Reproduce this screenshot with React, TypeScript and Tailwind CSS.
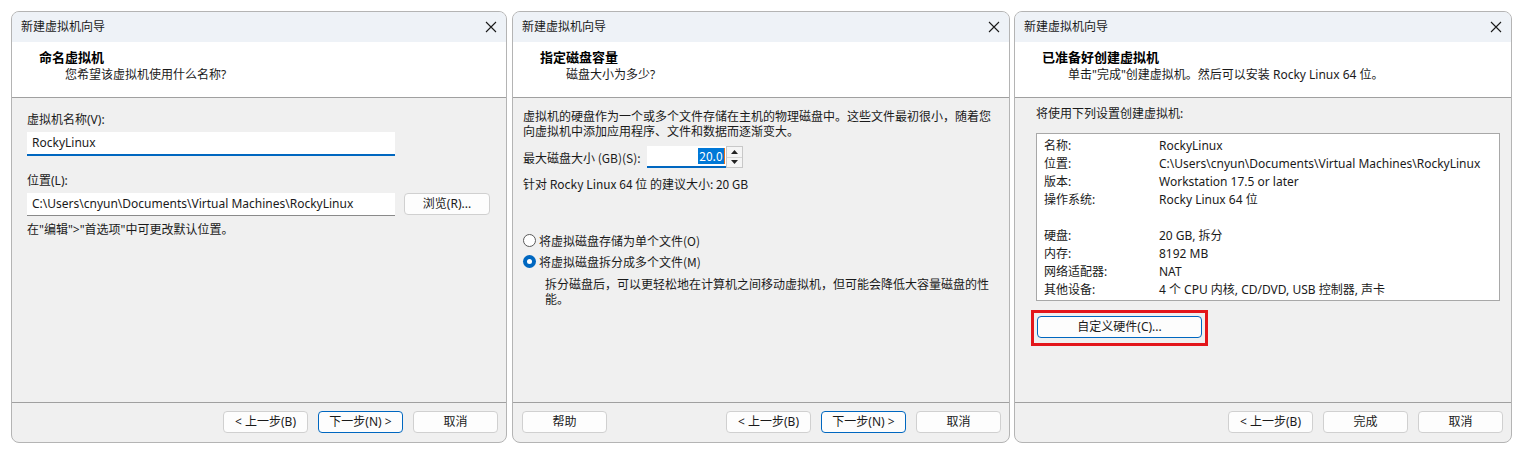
import React from "react";

const font = { fontFamily: '"Noto Sans", "Noto Sans CJK SC", sans-serif' };

const CloseIcon = () => (
  <svg width="12" height="12" viewBox="0 0 12 12" className="text-[#1a1a1a]">
    <path d="M1 1 L11 11 M11 1 L1 11" stroke="currentColor" strokeWidth="1.1" fill="none" />
  </svg>
);

const Btn = ({ children, primary = false, className = "" }: { children: React.ReactNode; primary?: boolean; className?: string }) => (
  <div
    className={`h-[22px] flex items-center justify-center rounded-[4px] border bg-[#fdfdfd] text-[12px] text-[#1a1a1a] ${
      primary ? "border-[#0067c0]" : "border-[#d0d0d0]"
    } ${className}`}
  >
    {children}
  </div>
);

const Dialog = ({
  width,
  title,
  subtitle,
  children,
  footer,
}: {
  width: string;
  title: string;
  subtitle: React.ReactNode;
  children: React.ReactNode;
  footer: React.ReactNode;
}) => (
  <div className={`${width} h-[432px] flex flex-col border border-[#b4b4b4] rounded-[8px] overflow-hidden bg-[#f0f0f0]`}>
    <div className="h-[30px] bg-[#eef2f7] flex items-center justify-between pl-[9px] pr-[9px]">
      <span className="text-[12px] text-[#1a1a1a]">新建虚拟机向导</span>
      <CloseIcon />
    </div>
    <div className="h-[56px] bg-white border-b border-[#a0a0a0] pl-[27px] pt-[6px]">
      <div className="text-[13px] font-bold leading-[18px] text-black">{title}</div>
      <div className="text-[12px] leading-[17px] pl-[26px] text-[#1a1a1a]">{subtitle}</div>
    </div>
    <div className="flex-1 flex flex-col">{children}</div>
    <div className="h-[40px] border-t border-[#a0a0a0] flex items-start pt-[8px] px-[8px]">{footer}</div>
  </div>
);

const NavButtons = ({ last = false }: { last?: boolean }) => (
  <div className="flex gap-[10px] ml-auto">
    <Btn className="w-[85px]">&lt; 上一步(B)</Btn>
    {last ? <Btn className="w-[85px]">完成</Btn> : <Btn primary className="w-[85px]">下一步(N) &gt;</Btn>}
    <Btn className="w-[85px]">取消</Btn>
  </div>
);

const summary: [string, string][] = [
  ["名称:", "RockyLinux"],
  ["位置:", "C:\\Users\\cnyun\\Documents\\Virtual Machines\\RockyLinux"],
  ["版本:", "Workstation 17.5 or later"],
  ["操作系统:", "Rocky Linux 64 位"],
  ["", ""],
  ["硬盘:", "20 GB, 拆分"],
  ["内存:", "8192 MB"],
  ["网络适配器:", "NAT"],
  ["其他设备:", "4 个 CPU 内核, CD/DVD, USB 控制器, 声卡"],
];

export default function App() {
  return (
    <div className="w-[1523px] h-[453px] bg-white flex gap-[5px] pl-[11px] pt-[11px] text-[#1a1a1a]" style={font}>
      {/* step 1 */}
      <Dialog width="w-[496px]" title="命名虚拟机" subtitle="您希望该虚拟机使用什么名称?" footer={<NavButtons />}>
        <div className="pl-[15px] pt-[14px] text-[12px]">
          <div className="leading-[16px]">虚拟机名称(V):</div>
          <div className="mt-[4px] w-[368px] h-[24px] bg-white border-b-2 border-[#0067c0] flex items-center pl-[5px]">RockyLinux</div>
          <div className="mt-[17px] leading-[16px]">位置(L):</div>
          <div className="mt-[4px] flex items-start">
            <div className="w-[368px] h-[23px] bg-white border-b border-[#8a8a8a] flex items-center pl-[5px]">
              C:\Users\cnyun\Documents\Virtual Machines\RockyLinux
            </div>
            <Btn className="ml-[9px] w-[86px]">浏览(R)...</Btn>
          </div>
          <div className="mt-[6px] leading-[16px]">在"编辑"&gt;"首选项"中可更改默认位置。</div>
        </div>
      </Dialog>

      {/* step 2 */}
      <Dialog
        width="w-[498px]"
        title="指定磁盘容量"
        subtitle="磁盘大小为多少?"
        footer={
          <>
            <Btn className="w-[85px] ml-[1px]">帮助</Btn>
            <NavButtons />
          </>
        }
      >
        <div className="pl-[10px] pt-[10px] text-[12px] leading-[15px]" style={{ fontFamily: '"Noto Sans CJK SC", sans-serif' }}>
          <div>
            虚拟机的硬盘作为一个或多个文件存储在主机的物理磁盘中。这些文件最初很小，随着您
            <br />
            向虚拟机中添加应用程序、文件和数据而逐渐变大。
          </div>
          <div className="mt-[8px] flex items-center">
            <span>最大磁盘大小 (GB)(S):</span>
            <div className="ml-[6px] w-[79px] h-[22px] bg-white border-b-2 border-[#0067c0] flex items-center justify-end pr-[1px]">
              <span className="bg-[#0078d7] text-white leading-[16px] px-[1px]">20.0</span>
              <span className="w-[1px] h-[16px] bg-[#e07020]" />
            </div>
            <div className="w-[17px] h-[22px] border border-[#c8c8c8] bg-[#f5f5f5] flex flex-col">
              <div className="flex-1 flex items-center justify-center border-b border-[#d8d8d8]">
                <svg width="7" height="4" viewBox="0 0 7 4"><path d="M0 4 L3.5 0 L7 4Z" fill="#222" /></svg>
              </div>
              <div className="flex-1 flex items-center justify-center">
                <svg width="7" height="4" viewBox="0 0 7 4"><path d="M0 0 L3.5 4 L7 0Z" fill="#222" /></svg>
              </div>
            </div>
          </div>
          <div className="mt-[8px]">针对 Rocky Linux 64 位 的建议大小: 20 GB</div>
          <div className="mt-[42px] flex items-center gap-[3px]">
            <span className="w-[13px] h-[13px] rounded-full border border-[#5a5a5a] bg-white" />
            <span>将虚拟磁盘存储为单个文件(O)</span>
          </div>
          <div className="mt-[6px] flex items-center gap-[3px]">
            <span className="w-[13px] h-[13px] rounded-full bg-[#0067c0] flex items-center justify-center">
              <span className="w-[5px] h-[5px] rounded-full bg-white" />
            </span>
            <span>将虚拟磁盘拆分成多个文件(M)</span>
          </div>
          <div className="mt-[7px] pl-[22px]">
            拆分磁盘后，可以更轻松地在计算机之间移动虚拟机，但可能会降低大容量磁盘的性
            <br />
            能。
          </div>
        </div>
      </Dialog>

      {/* step 3 */}
      <div className="-ml-[1px]">
        <Dialog
          width="w-[498px]"
          title="已准备好创建虚拟机"
          subtitle="单击&quot;完成&quot;创建虚拟机。然后可以安装 Rocky Linux 64 位。"
          footer={<NavButtons last />}
        >
          <div className="pl-[21px] pt-[8px] text-[12px]">
            <div className="leading-[16px]">将使用下列设置创建虚拟机:</div>
            <div className="mt-[11px] w-[464px] h-[168px] bg-white border border-[#a8a8a8] pt-[3px] pl-[7px]">
              {summary.map(([k, v], i) => (
                <div key={i} className="flex h-[18px] items-center">
                  <span className="w-[115px]">{k}</span>
                  <span>{v}</span>
                </div>
              ))}
            </div>
            <div className="-ml-[5px] mt-[9px] w-[177px] h-[36px] border-[3px] border-[#e3161b] p-[3px]">
              <Btn primary className="h-[22px] w-full">自定义硬件(C)...</Btn>
            </div>
          </div>
        </Dialog>
      </div>
    </div>
  );
}
